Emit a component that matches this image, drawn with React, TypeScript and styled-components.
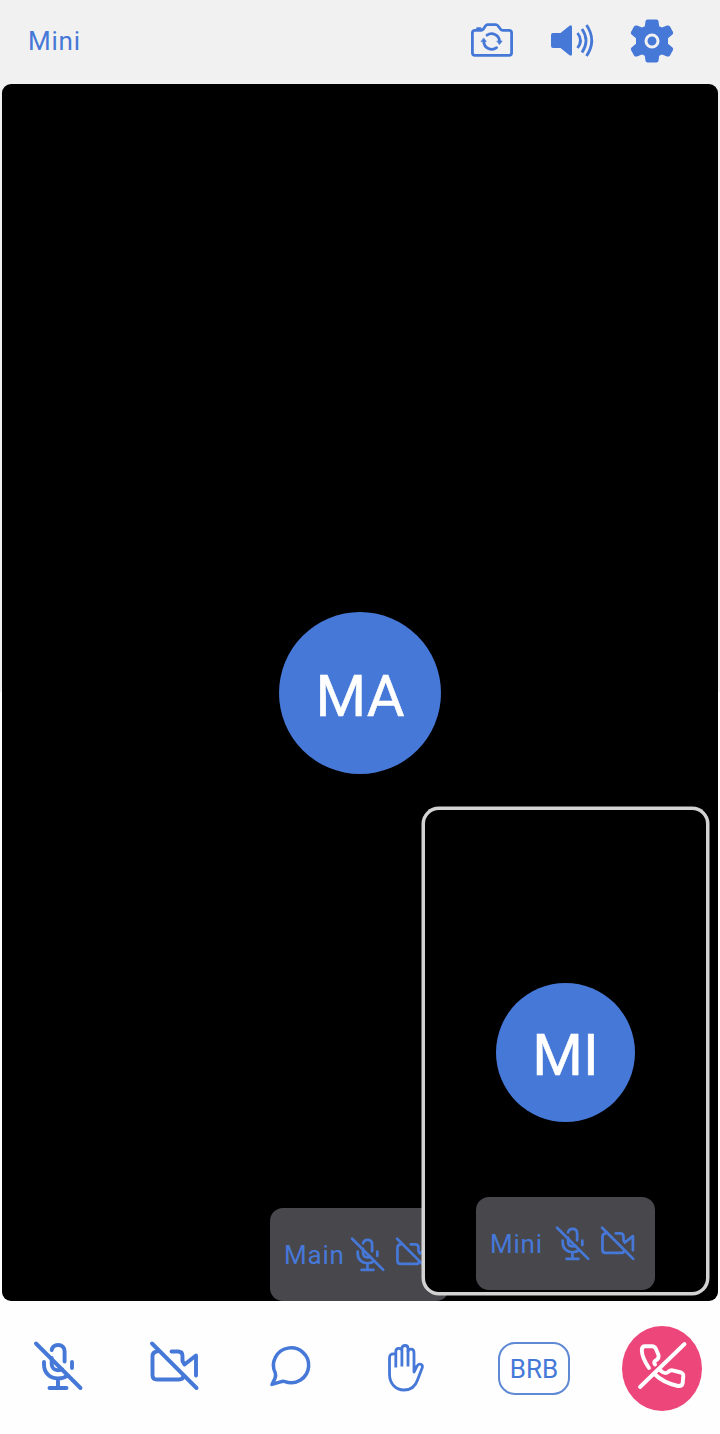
import React from "react";
import styled, { createGlobalStyle } from "styled-components";

const BLUE = "#4678d8";

const GlobalStyle = createGlobalStyle`
  *, *::before, *::after { box-sizing: border-box; }
  body { margin: 0; background: #fefefe; font-family: Roboto, "Liberation Sans", sans-serif; }
  button { font: inherit; color: inherit; background: none; border: 0; padding: 0; }
  svg { display: block; flex: none; overflow: visible; }
`;

const Screen = styled.div`
  width: 720px;
  height: 1434px;
  display: flex;
  flex-direction: column;
  overflow: hidden;
  color: ${BLUE};
`;

const TopBar = styled.header`
  height: 83.5px;
  flex: none;
  display: flex;
  justify-content: space-between;
  padding: 16px 43px 17px 28px;
  background: #f1f1f1;
`;

const Title = styled.h1`
  margin: 0;
  font-size: 26px;
  line-height: 50px;
  font-weight: 400;
  letter-spacing: 0.8px;
`;

const TopActions = styled.div`
  display: flex;
  gap: 30px;
`;

const IconButton = styled.button<{ $height?: number }>`
  width: 50px;
  height: ${({ $height }) => $height ?? 50}px;
  display: flex;
  align-items: center;
  justify-content: center;
`;

const StageFrame = styled.div`
  flex: none;
  overflow: hidden;
  background: linear-gradient(#f1f1f1 50%, #fefefe 50%);
`;

const Stage = styled.main`
  position: relative;
  height: 1217.5px;
  margin: 0 2px;
  display: flex;
  flex-direction: column;
  align-items: center;
  padding-bottom: 0.5px;
  background: #000;
  border-radius: 9px;
  overflow: hidden;
`;

const AvatarArea = styled.div<{ $top: number }>`
  padding-top: ${({ $top }) => $top}px;
  flex: 1;
`;

const Avatar = styled.div<{ $size: number }>`
  width: ${({ $size }) => $size}px;
  height: ${({ $size }) => $size}px;
  display: flex;
  align-items: center;
  justify-content: center;
  padding-top: 6px;
  border-radius: 50%;
  background: ${BLUE};
  color: #fff;
  font-size: 58px;
  line-height: 70px;
  -webkit-text-stroke: 0.5px #fff;
`;

const NameTag = styled.div<{ $offset?: number }>`
  width: 179px;
  height: 93px;
  flex: none;
  margin-right: ${({ $offset }) => $offset ?? 0}px;
  display: flex;
  align-items: center;
  padding: 1px 0 0 14px;
  border-radius: 13px;
  background: #48474c;
  font-size: 26px;
  letter-spacing: 0.8px;
`;

const TagLabel = styled.span<{ $width: number }>`
  width: ${({ $width }) => $width}px;
  flex: none;
`;

const TagIcons = styled.span`
  display: flex;
  gap: 10px;
  flex: none;
`;

const SelfView = styled.section`
  position: absolute;
  right: 9px;
  bottom: 6px;
  width: 287px;
  height: 488px;
  display: flex;
  flex-direction: column;
  align-items: center;
  padding-bottom: 2.5px;
  border: 3px solid #d2d2d2;
  border-radius: 17px;
  background: #000;
  box-shadow: 0 0 0 0.5px #d2d2d2;
`;

const BottomBar = styled.footer`
  flex: 1;
  display: flex;
  align-items: flex-start;
  padding: 25px 18px 0 33px;
`;

const BarItem = styled.button<{ $width: number; $gap: number; $height?: number }>`
  width: ${({ $width }) => $width}px;
  height: ${({ $height }) => $height ?? 84}px;
  flex: none;
  margin-right: ${({ $gap }) => $gap}px;
  display: flex;
  align-items: center;
  justify-content: center;
`;

const BrbBadge = styled.span`
  width: 72px;
  height: 53px;
  display: flex;
  align-items: center;
  justify-content: center;
  padding-top: 2px;
  border: 2px solid #5f89d4;
  border-radius: 17px;
  font-size: 26px;
`;

const HangUp = styled.button`
  width: 80px;
  height: 85px;
  flex: none;
  border-radius: 50%;
  background: #ec467a;
  color: #fff;
`;

const stroke = {
  fill: "none",
  stroke: "currentColor",
  strokeLinecap: "round" as const,
  strokeLinejoin: "round" as const,
};

const MicOff = ({ size = 50 }: { size?: number }) => (
  <svg width={size} height={size} viewBox="0 0 50 50" {...stroke} strokeWidth={3.9}>
    <path d="M3 2.5 47.5 47" />
    <path d="M18.7 9C19.5 5.5 22 4 25 4C29 4 31.6 6.5 31.6 10.5V20.5M18.7 17V23C18.7 27 21.5 29.2 25 29.2C26.5 29.2 28 29 29 28.2" />
    <path d="M11 21V23.5C11 32 17 37.5 25 37.5C29 37.5 32 36.5 34.5 34.5M39 21V27M25 37.5V47M16.5 47H33.5" />
  </svg>
);

const VideoOff = ({ size = 50 }: { size?: number }) => (
  <svg width={size} height={size} viewBox="0 0 50 50" {...stroke} strokeWidth={3.9}>
    <path d="M3 2.5 47.5 47" />
    <path d="M8 10.5Q3.5 11 3.5 15.5V34Q3.5 38.5 8 38.5H30Q34 38.5 34.5 35" />
    <path d="M22.5 10.5H29Q33.5 10.5 33.5 15V20L35.5 23.5 47 14.5V34.5" />
  </svg>
);

const CameraFlip = () => (
  <svg width="42" height="34" viewBox="0 0 42 34" {...stroke} strokeWidth={2.8}>
    <path d="M4 7.3H10.5C13.5 7.3 13.5 1.6 16.5 1.6H25C28 1.6 28.5 7.3 31.5 7.3H38Q40.6 7.3 40.6 9.9V29.7Q40.6 32.3 38 32.3H4Q1.4 32.3 1.4 29.7V9.9Q1.4 7.3 4 7.3Z" />
    <path d="M6.5 5.6H9.3" />
    <path d="M16 12.2A8 8 0 0 1 28.6 18M25.6 24.7A8 8 0 0 1 12.8 18.6" />
    <path d="M26 18H31.2L28.6 21.4ZM10.2 18.6H15.4L12.8 15.2Z" fill="currentColor" strokeWidth=".6" />
  </svg>
);

const Speaker = () => (
  <svg width="42" height="34" viewBox="0 0 42 34" {...stroke} strokeWidth={2.8} strokeLinecap="butt">
    <path d="M2 9H9.5L18.5 1.8Q21 .5 21 3V30Q21 32.5 18.5 31.2L9.5 24H2Q0 24 0 22V11Q0 9 2 9Z" fill="currentColor" stroke="none" />
    <path d="M26.5 9Q32.5 16.5 26.5 24M31 5Q39 16.5 31 28.5M35.5 1Q46 16.5 35.5 32" />
  </svg>
);

const Gear = () => (
  <svg width="44" height="44" viewBox="0 0 44 44">
    <path
      d="M17.5 .5H26.5Q28.3 .5 28.5 2.3L29.2 7.2L32 8.6L37 6.5Q39 6 40 7.6L43 13Q43.7 14.5 42.2 15.8L38 19.3V24.7L42.2 28.2Q43.7 29.5 43 31L40 36.4Q39 38 37 37.5L32 35.4L29.2 36.8L28.5 41.7Q28.3 43.5 26.5 43.5H17.5Q15.7 43.5 15.5 41.7L14.8 36.8L12 35.4L7 37.5Q5 38 4 36.4L1 31Q.3 29.5 1.8 28.2L6 24.7V19.3L1.8 15.8Q.3 14.5 1 13L4 7.6Q5 6 7 6.5L12 8.6L14.8 7.2L15.5 2.3Q15.7 .5 17.5 .5Z"
      fill="currentColor"
    />
    <circle cx="22" cy="22" r="6" fill="none" stroke="#f1f1f1" strokeWidth="3" />
  </svg>
);

const Chat = () => (
  <svg width="40" height="40" viewBox="0 0 40 40" {...stroke} strokeWidth={3.5}>
    <path d="M5.2 25.8A17.6 17.4 0 1 1 15 34.6Q13 34 10.5 34.8L2 37.4L5 31.2Q6.2 28.8 5.2 25.8Z" />
  </svg>
);

const Hand = () => (
  <svg width="36" height="48" viewBox="0 0 36 48" {...stroke} strokeWidth={2.8} strokeLinecap="butt">
    <path d="M7.8 23.5V9.8H5.5Q1.5 9.8 1.5 14V30C1.5 40 8 46 16 46C24 46 27.5 42 29.5 36L34.2 23.8C35.3 20 31 18.8 29 22L26 28V9Q26 5.2 23 5.2Q20 5.2 20 8" />
    <path d="M7.8 10V7.5Q7.8 4.3 10.8 4.3Q13.9 4.3 13.9 7V22.5M13.9 7V4.5Q13.9 1.5 17 1.5Q20 1.5 20 4.5V22.5" />
  </svg>
);

const PhoneOff = () => (
  <svg width="80" height="85" viewBox="0 0 80 85" {...stroke} strokeWidth={3.9}>
    <path d="M18 61 62.5 18" />
    <path d="M27 42C22 34.5 19.8 28.5 19.8 24Q19.8 20.2 23.2 20.2H30Q32.6 20.2 33.8 22.8L36.3 28.5C37.5 31.5 35.5 33.5 33.2 34.7Q31.5 36 33 38.5" />
    <path d="M32.5 48C39 54.5 47 58 56 60Q60 60.5 60.7 57L61.3 50Q61.5 47.5 59 46.5L50.5 44.3Q48.5 43.9 47 45.3C44.5 48 42.5 48 38.5 44.5" />
  </svg>
);

export default function App() {
  return (
    <Screen>
      <GlobalStyle />
      <TopBar>
        <Title>Mini</Title>
        <TopActions>
          <IconButton $height={48} aria-label="Switch camera"><CameraFlip /></IconButton>
          <IconButton aria-label="Speaker"><Speaker /></IconButton>
          <IconButton $height={49} aria-label="Settings"><Gear /></IconButton>
        </TopActions>
      </TopBar>
      <StageFrame>
        <Stage>
          <AvatarArea $top={528}><Avatar $size={162}>MA</Avatar></AvatarArea>
          <NameTag $offset={1}>
            <TagLabel $width={65.5}>Main</TagLabel>
            <TagIcons><MicOff size={35} /><VideoOff size={35} /></TagIcons>
          </NameTag>
          <SelfView>
            <AvatarArea $top={172.5}><Avatar $size={139.5}>MI</Avatar></AvatarArea>
            <NameTag>
              <TagLabel $width={65}>Mini</TagLabel>
              <TagIcons><MicOff size={35} /><VideoOff size={35} /></TagIcons>
            </NameTag>
          </SelfView>
        </Stage>
      </StageFrame>
      <BottomBar>
        <BarItem $width={50} $height={80} $gap={66} aria-label="Unmute"><MicOff /></BarItem>
        <BarItem $width={50} $height={80} $gap={71} aria-label="Start video"><VideoOff /></BarItem>
        <BarItem $width={40} $height={82} $gap={78} aria-label="Chat"><Chat /></BarItem>
        <BarItem $width={36} $gap={74} aria-label="Raise hand"><Hand /></BarItem>
        <BarItem $width={72} $gap={52}><BrbBadge>BRB</BrbBadge></BarItem>
        <HangUp aria-label="Hang up"><PhoneOff /></HangUp>
      </BottomBar>
    </Screen>
  );
}
